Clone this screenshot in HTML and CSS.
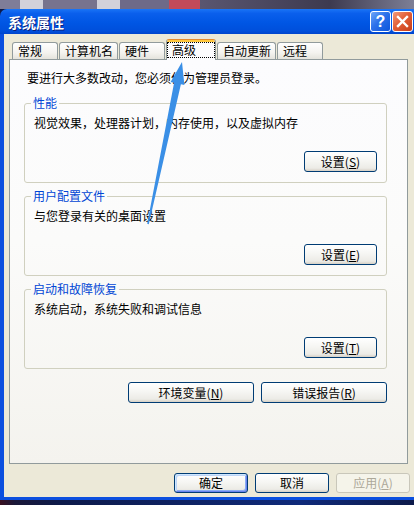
FILE: index.html
```html
<!DOCTYPE html>
<html lang="zh-CN">
<head>
<meta charset="utf-8">
<title>系统属性</title>
<link rel="stylesheet" href="styles.css">
</head>
<body>
<div class="screen">
  <div class="desk"></div>
  <div class="titlebar">
    <span class="title">系统属性</span>
    <div class="tb-buttons">
      <span class="tb-btn help">?</span>
      <span class="tb-btn close"><svg width="13" height="13" viewBox="0 0 13 13"><path d="M2 2 L11 11 M11 2 L2 11" stroke="#fff" stroke-width="2.4" stroke-linecap="square"/></svg></span>
    </div>
  </div>
  <div class="frame">
    <div class="client">
      <div class="tabs">
        <div class="tab">常规</div>
        <div class="tab">计算机名</div>
        <div class="tab">硬件</div>
        <div class="tab active"><span class="focus">高级</span></div>
        <div class="tab">自动更新</div>
        <div class="tab">远程</div>
      </div>
      <div class="panel">
        <p class="intro">要进行大多数改动，您必须作为管理员登录。</p>
        <fieldset class="group">
          <legend>性能</legend>
          <p>视觉效果，处理器计划，内存使用，以及虚拟内存</p>
          <div class="row"><button class="btn">设置(<u>S</u>)</button></div>
        </fieldset>
        <fieldset class="group">
          <legend>用户配置文件</legend>
          <p>与您登录有关的桌面设置</p>
          <div class="row"><button class="btn">设置(<u>E</u>)</button></div>
        </fieldset>
        <fieldset class="group">
          <legend>启动和故障恢复</legend>
          <p>系统启动，系统失败和调试信息</p>
          <div class="row"><button class="btn">设置(<u>T</u>)</button></div>
        </fieldset>
        <div class="env-row">
          <button class="btn wide">环境变量(<u>N</u>)</button>
          <button class="btn wide">错误报告(<u>R</u>)</button>
        </div>
      </div>
      <div class="actions">
        <button class="btn default">确定</button>
        <button class="btn">取消</button>
        <button class="btn disabled">应用(<u>A</u>)</button>
      </div>
    </div>
  </div>
  <div class="taskbar"></div>
  <svg class="arrow" viewBox="0 0 414 505" width="414" height="505">
    <polygon fill="#3a8fe6" points="182,62 184.4,84.9 180.9,84.2 148.8,224.2 147.2,223.8 174.1,82.7 170.6,82.1"/>
  </svg>
</div>
</body>
</html>
```

FILE: styles.css
```css
body {
  margin: 0;
  width: 414px;
  height: 505px;
  overflow: hidden;
  font-family: "Noto Sans CJK SC", "Liberation Sans", sans-serif;
  font-size: 12px;
  color: #000;
}

.screen {
  position: relative;
  width: 414px;
  height: 505px;
  overflow: hidden;
  background: #0d1a4a;
}

.desk {
  height: 9px;
  background: linear-gradient(to right,
    #7f7d98 0, #7f7d98 20px,
    #d2d1da 20px, #d2d1da 43px,
    #77738e 43px, #77738e 97px,
    #d2d1da 97px, #d2d1da 120px,
    #6e6a88 120px, #6e6a88 169px,
    #c24a5a 169px, #c24a5a 200px,
    #5a5670 200px, #3d3a4f 330px, #7d7f96 414px);
}

.titlebar {
  height: 25px;
  display: flex;
  align-items: center;
  justify-content: space-between;
  padding: 0 1px 0 8px;
  background: linear-gradient(#1a74f6, #0a5fec 18%, #0056e4 55%, #004fdb 88%, #0044cc);
  border-radius: 7px 0 0 0;
}

.title {
  color: #fff;
  font-weight: bold;
  font-size: 14px;
  line-height: 16px;
  text-shadow: 1px 1px 0 #0a1e7a;
}

.tb-buttons {
  display: flex;
  gap: 1px;
}

.tb-btn {
  box-sizing: border-box;
  width: 21px;
  height: 21px;
  border: 1px solid #fff;
  border-radius: 3px;
  display: flex;
  align-items: center;
  justify-content: center;
  color: #fff;
  font-family: "Liberation Sans", sans-serif;
  font-weight: bold;
  font-size: 16px;
  line-height: 19px;
}

.help {
  background: linear-gradient(135deg, #6ea6f8, #2b71ea 45%, #0d55dc);
}

.close {
  background: linear-gradient(135deg, #f09a7c, #e35f38 45%, #c63d18);
}

.frame {
  border-left: 4px solid #0b4fdf;
  border-bottom: 3px solid #0b4fdf;
  background: #ece9d8;
}

.client {
  height: 463px;
  display: flex;
  flex-direction: column;
}

.tabs {
  height: 25px;
  display: flex;
  align-items: flex-end;
  gap: 1px;
  padding-left: 8px;
}

.tab {
  box-sizing: border-box;
  height: 17px;
  min-width: 46px;
  padding: 0 4px 0 5px;
  border: 1px solid #919b9c;
  border-bottom: none;
  border-radius: 3px 3px 0 0;
  background: linear-gradient(#fefefe, #f4f3ef 60%, #e4e3dc);
  line-height: 16px;
  white-space: nowrap;
}

.tab.active {
  position: relative;
  z-index: 1;
  height: 21px;
  min-width: 50px;
  margin-bottom: -1px;
  padding: 2px 0 0;
  background: #fcfcfe;
  border-top: 1px solid #e68b2c;
  box-shadow: inset 0 2px 0 #ffc73c;
}

.focus {
  display: block;
  height: 16px;
  box-sizing: border-box;
  border: 1px dotted #000;
  padding: 0 4px;
  line-height: 14px;
}

.panel {
  box-sizing: border-box;
  height: 405px;
  margin: 0 6px 0 5px;
  padding: 11px 20px 0 14px;
  border: 1px solid #919b9c;
  background: linear-gradient(#fcfcfe, #fbfbfa 45%, #f4f3ee);
  display: flex;
  flex-direction: column;
}

.intro {
  margin: 0 0 0 3px;
  line-height: 14px;
}

.group {
  margin: 11px 0 0;
  padding: 6px 9px 10px;
  border: 1px solid #d0d0bf;
  border-radius: 3px;
  min-width: 0;
}

.group + .group {
  margin-top: 6px;
}

.group legend {
  padding: 0 2px;
  margin-left: -3px;
  color: #0046d5;
  line-height: 14px;
}

.group p {
  margin: 0;
  line-height: 14px;
}

.row {
  display: flex;
  justify-content: flex-end;
  margin-top: 21px;
}

.btn {
  box-sizing: border-box;
  width: 73px;
  height: 21px;
  padding: 0;
  border: 1px solid #003c74;
  border-radius: 3px;
  background: linear-gradient(#ffffff, #f6f6f3 45%, #ecebe6 85%, #d6d0c5);
  color: #000;
  font-family: "Noto Sans CJK SC", "Liberation Sans", sans-serif;
  font-size: 12px;
  line-height: 19px;
  text-align: center;
}

.btn u {
  text-underline-offset: 1px;
}

.env-row {
  display: flex;
  justify-content: flex-end;
  gap: 7px;
  margin-top: 13px;
}

.btn.wide {
  width: 126px;
}

.actions {
  display: flex;
  justify-content: flex-end;
  gap: 7px;
  margin: 9px 4px 0 0;
}

.actions .btn {
  width: 74px;
  height: 20px;
  line-height: 18px;
}

.btn.default {
  box-shadow: inset 1px 1px 0 #cee7ff, inset -1px -1px 0 #6982ee, inset 2px 2px 0 #bcd4f6, inset -2px -2px 0 #89adf4;
}

.btn.disabled {
  border-color: #c9c7ba;
  background: #f5f4ea;
  color: #aca899;
}

.taskbar {
  height: 5px;
  background: linear-gradient(to right, #3a1020 0, #1a1838 15px, #0d1a4a 60px, #0f2a7a 300px, #0d1a4a 414px);
}

.arrow {
  position: absolute;
  left: 0;
  top: 0;
  pointer-events: none;
}
```
